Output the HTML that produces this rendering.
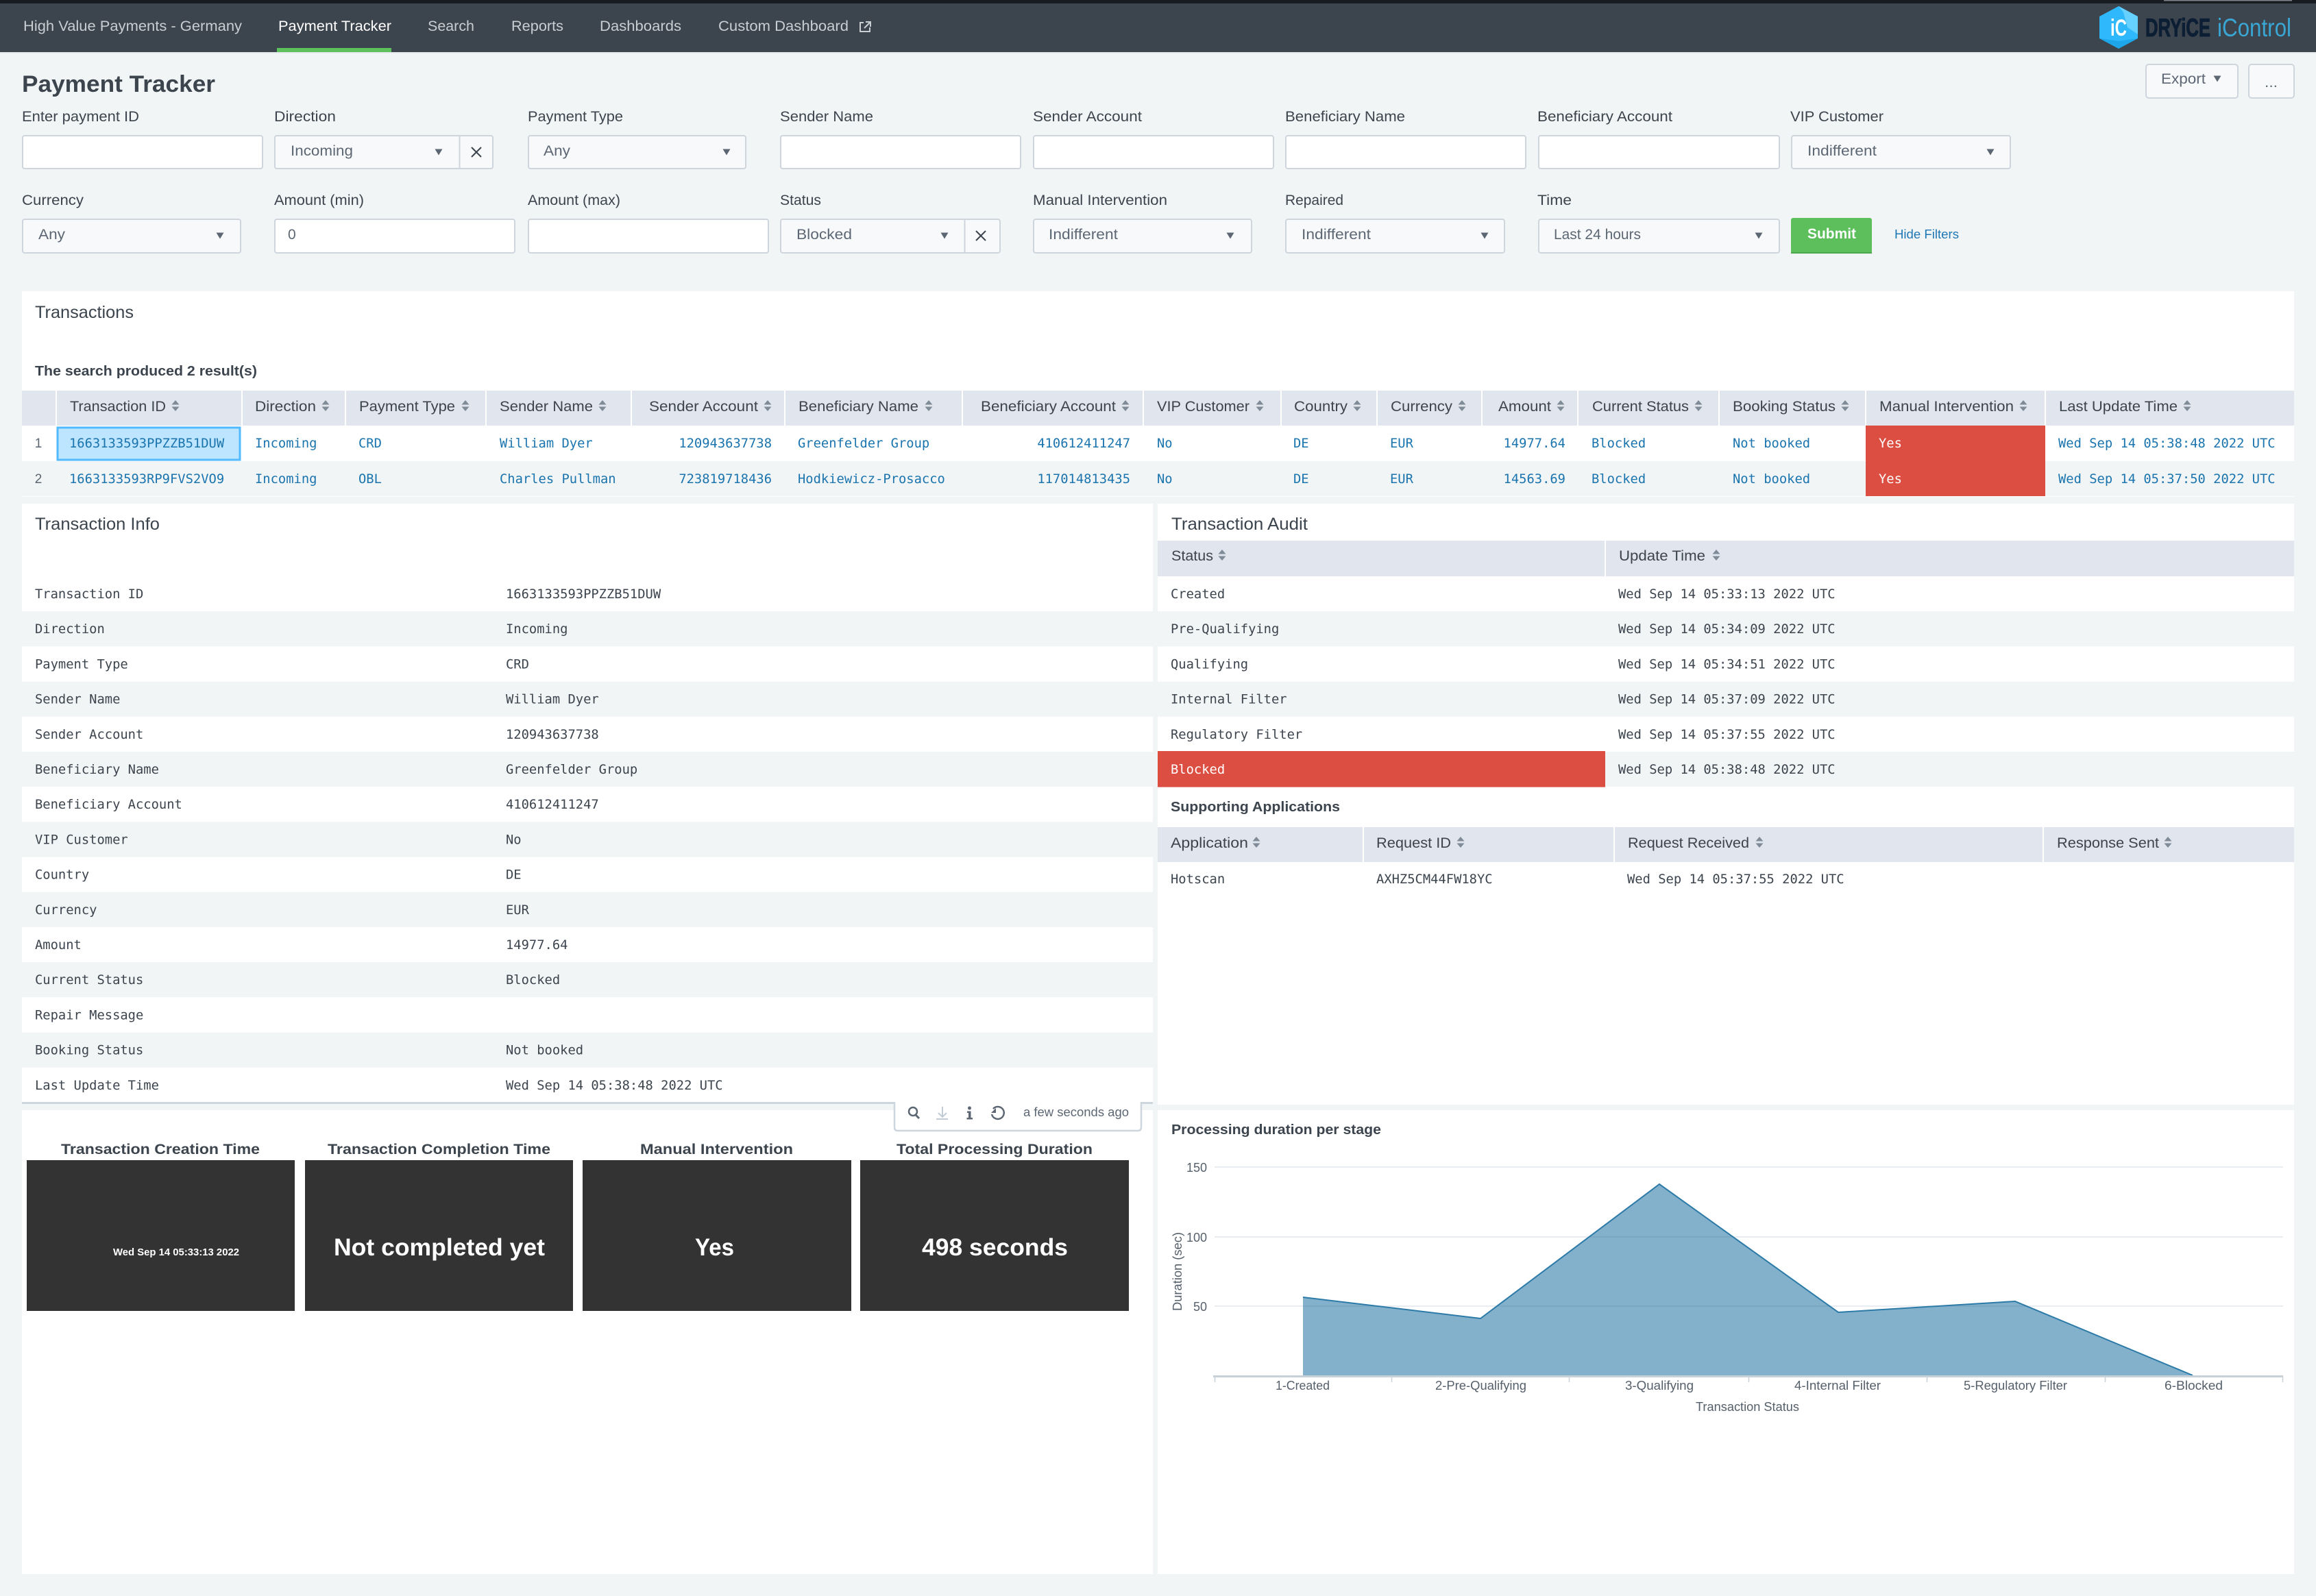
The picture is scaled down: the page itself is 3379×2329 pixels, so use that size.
<!DOCTYPE html>
<html lang="en"><head><meta charset="utf-8"><title>Payment Tracker</title>
<style>
html,body{margin:0;padding:0;background:#f2f5f6;width:3379px;height:2329px;overflow:hidden}
svg{display:block}
text{font-family:"Liberation Sans",sans-serif;fill:#3c444d;font-size:21px}
.n{fill:#c9ced3}
.h{font-size:21px}
.t{font-size:25px}
.b{font-weight:bold;font-size:20.5px}
.m{font-family:"DejaVu Sans Mono","Liberation Mono",monospace;font-size:18.8px}
.l{font-family:"DejaVu Sans Mono","Liberation Mono",monospace;font-size:18.8px;fill:#1a74ae}
.w{fill:#fff}
.sel{fill:#5c6773}
.c{font-size:18px;fill:#56606b}
</style></head><body>
<svg width="3379" height="2329" viewBox="0 0 3379 2329" xmlns="http://www.w3.org/2000/svg">
<defs>
<g id="srt"><polygon points="-5.5,-1.5 5.5,-1.5 0,-8" fill="#7f8b97"/><polygon points="-5.5,1.5 5.5,1.5 0,8" fill="#7f8b97"/></g>
<polygon id="car" points="-5.5,-4.5 5.5,-4.5 0,4.5" fill="#5c6773"/>
</defs>
<rect width="3379" height="2329" fill="#f2f5f6"/>

<!-- nav -->
<rect width="3379" height="76" fill="#3c444d"/>
<rect width="3379" height="5" fill="#171c20"/>
<rect x="3157" y="0" width="187" height="1.5" fill="#7d848b"/>
<rect y="76" width="3379" height="1.5" fill="#dfe3e6"/>
<rect x="404" y="70" width="167" height="6" fill="#5cc05c"/>
<text class="n" x="34" y="45" textLength="319" lengthAdjust="spacingAndGlyphs">High Value Payments - Germany</text>
<text class="w" x="406" y="45" textLength="165" lengthAdjust="spacingAndGlyphs">Payment Tracker</text>
<text class="n" x="624" y="45" textLength="68" lengthAdjust="spacingAndGlyphs">Search</text>
<text class="n" x="746" y="45" textLength="76" lengthAdjust="spacingAndGlyphs">Reports</text>
<text class="n" x="875" y="45" textLength="119" lengthAdjust="spacingAndGlyphs">Dashboards</text>
<text class="n" x="1048" y="45" textLength="190" lengthAdjust="spacingAndGlyphs">Custom Dashboard</text>
<path d="M1260 33H1255V46H1269V40M1263 32H1270V39M1270 32L1261 41" fill="none" stroke="#c9ced3" stroke-width="2"/>

<!-- logo -->
<polygon points="3091,9 3119,24 3119,56 3091,71 3063,56 3063,24" fill="#2fb8fb"/>
<polygon points="3091,9 3119,24 3119,50 3104,40 3098,18" fill="#66d0ff"/>
<polygon points="3063,56 3091,71 3119,56 3091,60" fill="#1ea6ea"/>
<text x="3079" y="52" textLength="24" lengthAdjust="spacingAndGlyphs" style="font-size:34px;font-weight:bold;fill:#fff">iC</text>
<text x="3130" y="53" textLength="95" lengthAdjust="spacingAndGlyphs" style="font-size:37px;font-weight:bold;fill:#0c1e34;stroke:#0c1e34;stroke-width:1">DRYiCE</text>
<text x="3235" y="53" textLength="108" lengthAdjust="spacingAndGlyphs" style="font-size:37px;fill:#3aa6d4">iControl</text>

<!-- page title -->
<text x="32" y="134" textLength="282" lengthAdjust="spacingAndGlyphs" style="font-size:34px;font-weight:bold">Payment Tracker</text>

<!-- buttons -->
<rect x="3131" y="94" width="134" height="49" rx="4" fill="#f8f9fb" stroke="#cfd5dd" stroke-width="2"/>
<rect x="3281" y="94" width="66" height="49" rx="4" fill="#f8f9fb" stroke="#cfd5dd" stroke-width="2"/>
<text class="sel" x="3153" y="122" textLength="65" lengthAdjust="spacingAndGlyphs">Export</text>
<use href="#car" x="3235" y="115"/>
<text class="sel" x="3304" y="127" textLength="19" lengthAdjust="spacingAndGlyphs">...</text>

<!-- filter labels row 1 -->
<text x="32" y="177" textLength="171" lengthAdjust="spacingAndGlyphs">Enter payment ID</text>
<text x="400" y="177" textLength="90" lengthAdjust="spacingAndGlyphs">Direction</text>
<text x="770" y="177" textLength="139" lengthAdjust="spacingAndGlyphs">Payment Type</text>
<text x="1138" y="177" textLength="136" lengthAdjust="spacingAndGlyphs">Sender Name</text>
<text x="1507" y="177" textLength="159" lengthAdjust="spacingAndGlyphs">Sender Account</text>
<text x="1875" y="177" textLength="175" lengthAdjust="spacingAndGlyphs">Beneficiary Name</text>
<text x="2243" y="177" textLength="197" lengthAdjust="spacingAndGlyphs">Beneficiary Account</text>
<text x="2612" y="177" textLength="136" lengthAdjust="spacingAndGlyphs">VIP Customer</text>

<!-- filter boxes row 1 -->
<g stroke="#cfd5dd" stroke-width="2">
<rect x="33" y="198" width="350" height="48" rx="3" fill="#fff"/>
<rect x="401" y="198" width="318" height="48" rx="3" fill="#f8f9fb"/>
<rect x="771" y="198" width="317" height="48" rx="3" fill="#f8f9fb"/>
<rect x="1139" y="198" width="350" height="48" rx="3" fill="#fff"/>
<rect x="1508" y="198" width="350" height="48" rx="3" fill="#fff"/>
<rect x="1876" y="198" width="350" height="48" rx="3" fill="#fff"/>
<rect x="2245" y="198" width="351" height="48" rx="3" fill="#fff"/>
<rect x="2614" y="198" width="319" height="48" rx="3" fill="#f8f9fb"/>
<line x1="670.5" y1="198" x2="670.5" y2="246"/>
</g>
<text class="sel" x="424" y="227" textLength="91" lengthAdjust="spacingAndGlyphs">Incoming</text>
<use href="#car" x="640" y="222"/>
<path d="M688 215L702 229M702 215L688 229" stroke="#3c444d" stroke-width="2" fill="none"/>
<text class="sel" x="793" y="227" textLength="39" lengthAdjust="spacingAndGlyphs">Any</text>
<use href="#car" x="1060" y="222"/>
<text class="sel" x="2637" y="227" textLength="101" lengthAdjust="spacingAndGlyphs">Indifferent</text>
<use href="#car" x="2904" y="222"/>

<!-- filter labels row 2 -->
<text x="32" y="299" textLength="90" lengthAdjust="spacingAndGlyphs">Currency</text>
<text x="400" y="299" textLength="131" lengthAdjust="spacingAndGlyphs">Amount (min)</text>
<text x="770" y="299" textLength="135" lengthAdjust="spacingAndGlyphs">Amount (max)</text>
<text x="1138" y="299" textLength="60" lengthAdjust="spacingAndGlyphs">Status</text>
<text x="1507" y="299" textLength="196" lengthAdjust="spacingAndGlyphs">Manual Intervention</text>
<text x="1875" y="299" textLength="85" lengthAdjust="spacingAndGlyphs">Repaired</text>
<text x="2243" y="299" textLength="50" lengthAdjust="spacingAndGlyphs">Time</text>

<g stroke="#cfd5dd" stroke-width="2">
<rect x="33" y="320" width="318" height="49" rx="3" fill="#f8f9fb"/>
<rect x="401" y="320" width="350" height="49" rx="3" fill="#fff"/>
<rect x="771" y="320" width="350" height="49" rx="3" fill="#fff"/>
<rect x="1139" y="320" width="320" height="49" rx="3" fill="#f8f9fb"/>
<rect x="1508" y="320" width="318" height="49" rx="3" fill="#f8f9fb"/>
<rect x="1876" y="320" width="319" height="49" rx="3" fill="#f8f9fb"/>
<rect x="2245" y="320" width="351" height="49" rx="3" fill="#f8f9fb"/>
<line x1="1407.5" y1="320" x2="1407.5" y2="369"/>
</g>
<text class="sel" x="56" y="349" textLength="39" lengthAdjust="spacingAndGlyphs">Any</text>
<use href="#car" x="321" y="344"/>
<text class="sel" x="420" y="349">0</text>
<text class="sel" x="1162" y="349" textLength="81" lengthAdjust="spacingAndGlyphs">Blocked</text>
<use href="#car" x="1378" y="344"/>
<path d="M1424 337L1438 351M1438 337L1424 351" stroke="#3c444d" stroke-width="2" fill="none"/>
<text class="sel" x="1530" y="349" textLength="101" lengthAdjust="spacingAndGlyphs">Indifferent</text>
<use href="#car" x="1795" y="344"/>
<text class="sel" x="1899" y="349" textLength="101" lengthAdjust="spacingAndGlyphs">Indifferent</text>
<use href="#car" x="2166" y="344"/>
<text class="sel" x="2267" y="349" textLength="127" lengthAdjust="spacingAndGlyphs">Last 24 hours</text>
<use href="#car" x="2566" y="344"/>
<rect x="2613" y="318" width="118" height="52" rx="3" fill="#5cbf5c"/>
<rect x="2613" y="368" width="118" height="2" fill="#4ba74b"/>
<text x="2637" y="348" textLength="71" lengthAdjust="spacingAndGlyphs" style="fill:#fff;font-weight:bold">Submit</text>
<text x="2764" y="348" textLength="94" lengthAdjust="spacingAndGlyphs" style="fill:#1e77b5;font-size:18px">Hide Filters</text>

<!-- Transactions panel -->
<rect x="32" y="425" width="3315" height="300" fill="#fff"/>
<text class="t" x="51" y="464" textLength="144" lengthAdjust="spacingAndGlyphs">Transactions</text>
<text class="b" x="51" y="548" textLength="324" lengthAdjust="spacingAndGlyphs">The search produced 2 result(s)</text>
<rect x="32" y="570" width="3315" height="51" fill="#e1e5ed"/>
<g fill="#fff">
<rect x="81" y="570" width="2" height="51"/><rect x="352" y="570" width="2" height="51"/><rect x="503" y="570" width="2" height="51"/><rect x="708" y="570" width="2" height="51"/><rect x="920" y="570" width="2" height="51"/><rect x="1144" y="570" width="2" height="51"/><rect x="1403" y="570" width="2" height="51"/><rect x="1667" y="570" width="2" height="51"/><rect x="1868" y="570" width="2" height="51"/><rect x="2008" y="570" width="2" height="51"/><rect x="2161" y="570" width="2" height="51"/><rect x="2301" y="570" width="2" height="51"/><rect x="2507" y="570" width="2" height="51"/><rect x="2721" y="570" width="2" height="51"/><rect x="2983" y="570" width="2" height="51"/>
</g>
<text x="102" y="600" textLength="140" lengthAdjust="spacingAndGlyphs">Transaction ID</text><use href="#srt" x="256" y="592"/>
<text x="372" y="600" textLength="89" lengthAdjust="spacingAndGlyphs">Direction</text><use href="#srt" x="475" y="592"/>
<text x="524" y="600" textLength="140" lengthAdjust="spacingAndGlyphs">Payment Type</text><use href="#srt" x="679" y="592"/>
<text x="729" y="600" textLength="136" lengthAdjust="spacingAndGlyphs">Sender Name</text><use href="#srt" x="879" y="592"/>
<text x="947" y="600" textLength="159" lengthAdjust="spacingAndGlyphs">Sender Account</text><use href="#srt" x="1120" y="592"/>
<text x="1165" y="600" textLength="175" lengthAdjust="spacingAndGlyphs">Beneficiary Name</text><use href="#srt" x="1355" y="592"/>
<text x="1431" y="600" textLength="197" lengthAdjust="spacingAndGlyphs">Beneficiary Account</text><use href="#srt" x="1642" y="592"/>
<text x="1688" y="600" textLength="135" lengthAdjust="spacingAndGlyphs">VIP Customer</text><use href="#srt" x="1838" y="592"/>
<text x="1888" y="600" textLength="78" lengthAdjust="spacingAndGlyphs">Country</text><use href="#srt" x="1980" y="592"/>
<text x="2029" y="600" textLength="90" lengthAdjust="spacingAndGlyphs">Currency</text><use href="#srt" x="2133" y="592"/>
<text x="2186" y="600" textLength="77" lengthAdjust="spacingAndGlyphs">Amount</text><use href="#srt" x="2277" y="592"/>
<text x="2323" y="600" textLength="141" lengthAdjust="spacingAndGlyphs">Current Status</text><use href="#srt" x="2478" y="592"/>
<text x="2528" y="600" textLength="150" lengthAdjust="spacingAndGlyphs">Booking Status</text><use href="#srt" x="2692" y="592"/>
<text x="2742" y="600" textLength="196" lengthAdjust="spacingAndGlyphs">Manual Intervention</text><use href="#srt" x="2952" y="592"/>
<text x="3004" y="600" textLength="173" lengthAdjust="spacingAndGlyphs">Last Update Time</text><use href="#srt" x="3191" y="592"/>

<rect x="32" y="673" width="3315" height="51" fill="#f2f5f6"/>
<rect x="84" y="624" width="266" height="47" fill="#bde5ff" stroke="#52baff" stroke-width="3"/>
<rect x="2722" y="621" width="262" height="103" fill="#dc4e41"/>
<text x="56" y="653" text-anchor="middle" style="font-size:19px;fill:#5c6773">1</text>
<text x="56" y="705" text-anchor="middle" style="font-size:19px;fill:#5c6773">2</text>
<text class="l" x="101" y="653">1663133593PPZZB51DUW</text>
<text class="l" x="372" y="653">Incoming</text>
<text class="l" x="523" y="653">CRD</text>
<text class="l" x="729" y="653">William Dyer</text>
<text class="l" x="1126" y="653" text-anchor="end">120943637738</text>
<text class="l" x="1164" y="653">Greenfelder Group</text>
<text class="l" x="1649" y="653" text-anchor="end">410612411247</text>
<text class="l" x="1688" y="653">No</text>
<text class="l" x="1887" y="653">DE</text>
<text class="l" x="2028" y="653">EUR</text>
<text class="l" x="2284" y="653" text-anchor="end">14977.64</text>
<text class="l" x="2322" y="653">Blocked</text>
<text class="l" x="2528" y="653">Not booked</text>
<text class="m" x="2741" y="653" style="fill:#fff">Yes</text>
<text class="l" x="3003" y="653">Wed Sep 14 05:38:48 2022 UTC</text>
<text class="l" x="101" y="705">1663133593RP9FVS2VO9</text>
<text class="l" x="372" y="705">Incoming</text>
<text class="l" x="523" y="705">OBL</text>
<text class="l" x="729" y="705">Charles Pullman</text>
<text class="l" x="1126" y="705" text-anchor="end">723819718436</text>
<text class="l" x="1164" y="705">Hodkiewicz-Prosacco</text>
<text class="l" x="1649" y="705" text-anchor="end">117014813435</text>
<text class="l" x="1688" y="705">No</text>
<text class="l" x="1887" y="705">DE</text>
<text class="l" x="2028" y="705">EUR</text>
<text class="l" x="2284" y="705" text-anchor="end">14563.69</text>
<text class="l" x="2322" y="705">Blocked</text>
<text class="l" x="2528" y="705">Not booked</text>
<text class="m" x="2741" y="705" style="fill:#fff">Yes</text>
<text class="l" x="3003" y="705">Wed Sep 14 05:37:50 2022 UTC</text>

<!-- Transaction Info -->
<rect x="32" y="735" width="1650" height="873" fill="#fff"/>
<rect x="32" y="1608" width="1650" height="3" fill="#cdd5dd"/>
<text class="t" x="51" y="773" textLength="182" lengthAdjust="spacingAndGlyphs">Transaction Info</text>
<g fill="#f2f5f6">
<rect x="32" y="892.2" width="1650" height="51.2"/>
<rect x="32" y="994.6" width="1650" height="51.2"/>
<rect x="32" y="1097" width="1650" height="51.2"/>
<rect x="32" y="1199.4" width="1650" height="51.2"/>
<rect x="32" y="1301.8" width="1650" height="51.2"/>
<rect x="32" y="1404.2" width="1650" height="51.2"/>
<rect x="32" y="1506.6" width="1650" height="51.2"/>
</g>
<text class="m" x="51" y="873">Transaction ID</text><text class="m" x="738" y="873">1663133593PPZZB51DUW</text>
<text class="m" x="51" y="924.2">Direction</text><text class="m" x="738" y="924.2">Incoming</text>
<text class="m" x="51" y="975.4">Payment Type</text><text class="m" x="738" y="975.4">CRD</text>
<text class="m" x="51" y="1026.6">Sender Name</text><text class="m" x="738" y="1026.6">William Dyer</text>
<text class="m" x="51" y="1077.8">Sender Account</text><text class="m" x="738" y="1077.8">120943637738</text>
<text class="m" x="51" y="1129">Beneficiary Name</text><text class="m" x="738" y="1129">Greenfelder Group</text>
<text class="m" x="51" y="1180.2">Beneficiary Account</text><text class="m" x="738" y="1180.2">410612411247</text>
<text class="m" x="51" y="1231.4">VIP Customer</text><text class="m" x="738" y="1231.4">No</text>
<text class="m" x="51" y="1282.6">Country</text><text class="m" x="738" y="1282.6">DE</text>
<text class="m" x="51" y="1333.8">Currency</text><text class="m" x="738" y="1333.8">EUR</text>
<text class="m" x="51" y="1385">Amount</text><text class="m" x="738" y="1385">14977.64</text>
<text class="m" x="51" y="1436.2">Current Status</text><text class="m" x="738" y="1436.2">Blocked</text>
<text class="m" x="51" y="1487.4">Repair Message</text>
<text class="m" x="51" y="1538.6">Booking Status</text><text class="m" x="738" y="1538.6">Not booked</text>
<text class="m" x="51" y="1589.8">Last Update Time</text><text class="m" x="738" y="1589.8">Wed Sep 14 05:38:48 2022 UTC</text>

<!-- Transaction Audit -->
<rect x="1689" y="735" width="1658" height="877" fill="#fff"/>
<text class="t" x="1709" y="773" textLength="199" lengthAdjust="spacingAndGlyphs">Transaction Audit</text>
<rect x="1689" y="789" width="1658" height="52" fill="#e1e5ed"/>
<rect x="2341" y="789" width="2" height="52" fill="#fff"/>
<text x="1709" y="818" textLength="61" lengthAdjust="spacingAndGlyphs">Status</text><use href="#srt" x="1783" y="810"/>
<text x="2362" y="818" textLength="126" lengthAdjust="spacingAndGlyphs">Update Time</text><use href="#srt" x="2504" y="810"/>
<rect x="1689" y="892.2" width="1658" height="51.2" fill="#f2f5f6"/>
<rect x="1689" y="994.6" width="1658" height="51.2" fill="#f2f5f6"/>
<rect x="1689" y="1097" width="1658" height="51.2" fill="#f2f5f6"/>
<rect x="1689" y="1096" width="653" height="52.6" fill="#dc4e41"/>
<text class="m" x="1708" y="873">Created</text><text class="m" x="2361" y="873">Wed Sep 14 05:33:13 2022 UTC</text>
<text class="m" x="1708" y="924.2">Pre-Qualifying</text><text class="m" x="2361" y="924.2">Wed Sep 14 05:34:09 2022 UTC</text>
<text class="m" x="1708" y="975.4">Qualifying</text><text class="m" x="2361" y="975.4">Wed Sep 14 05:34:51 2022 UTC</text>
<text class="m" x="1708" y="1026.6">Internal Filter</text><text class="m" x="2361" y="1026.6">Wed Sep 14 05:37:09 2022 UTC</text>
<text class="m" x="1708" y="1077.8">Regulatory Filter</text><text class="m" x="2361" y="1077.8">Wed Sep 14 05:37:55 2022 UTC</text>
<text class="m" x="1708" y="1129" style="fill:#fff">Blocked</text><text class="m" x="2361" y="1129">Wed Sep 14 05:38:48 2022 UTC</text>

<text class="b" x="1708" y="1184" textLength="247" lengthAdjust="spacingAndGlyphs">Supporting Applications</text>
<rect x="1689" y="1207" width="1658" height="51" fill="#e1e5ed"/>
<g fill="#fff"><rect x="1988" y="1207" width="2" height="51"/><rect x="2354" y="1207" width="2" height="51"/><rect x="2980" y="1207" width="2" height="51"/></g>
<text x="1708" y="1237" textLength="113" lengthAdjust="spacingAndGlyphs">Application</text><use href="#srt" x="1833" y="1229"/>
<text x="2008" y="1237" textLength="109" lengthAdjust="spacingAndGlyphs">Request ID</text><use href="#srt" x="2131" y="1229"/>
<text x="2375" y="1237" textLength="177" lengthAdjust="spacingAndGlyphs">Request Received</text><use href="#srt" x="2567" y="1229"/>
<text x="3001" y="1237" textLength="149" lengthAdjust="spacingAndGlyphs">Response Sent</text><use href="#srt" x="3163" y="1229"/>
<text class="m" x="1708" y="1289">Hotscan</text>
<text class="m" x="2008" y="1289">AXHZ5CM44FW18YC</text>
<text class="m" x="2374" y="1289">Wed Sep 14 05:37:55 2022 UTC</text>

<!-- Bottom left panel -->
<rect x="32" y="1620" width="1650" height="677" fill="#fff"/>
<path d="M1305 1608V1645Q1305 1650 1310 1650H1660Q1665 1650 1665 1645V1608" fill="#fff" stroke="#cdd5dd" stroke-width="2.5"/>
<rect x="1306.5" y="1606" width="357" height="6" fill="#fff"/>
<circle cx="1332" cy="1622" r="6" fill="none" stroke="#5c6773" stroke-width="2.5"/>
<path d="M1336 1627L1341 1632" stroke="#5c6773" stroke-width="3"/>
<path d="M1375 1615V1629M1369 1624L1375 1630L1381 1624M1366 1633H1383" fill="none" stroke="#c3cbd4" stroke-width="2"/>
<circle cx="1414.5" cy="1617" r="2.5" fill="#5c6773"/>
<path d="M1411 1621.5H1416.5V1631H1419V1633.5H1410.5V1631H1413V1624H1411Z" fill="#5c6773"/>
<path d="M1449 1618A9 9 0 1 1 1447 1626" fill="none" stroke="#5c6773" stroke-width="2.5"/>
<polygon points="1446,1624 1453,1624 1453,1617" fill="#5c6773"/>
<text x="1493" y="1629" textLength="154" lengthAdjust="spacingAndGlyphs" style="font-size:18px;fill:#5c6773">a few seconds ago</text>

<text class="b" x="89" y="1684" textLength="290" lengthAdjust="spacingAndGlyphs" style="font-size:21.5px">Transaction Creation Time</text>
<text class="b" x="478" y="1684" textLength="325" lengthAdjust="spacingAndGlyphs" style="font-size:21.5px">Transaction Completion Time</text>
<text class="b" x="934" y="1684" textLength="223" lengthAdjust="spacingAndGlyphs" style="font-size:21.5px">Manual Intervention</text>
<text class="b" x="1308" y="1684" textLength="286" lengthAdjust="spacingAndGlyphs" style="font-size:21.5px">Total Processing Duration</text>
<g fill="#333">
<rect x="39" y="1693" width="391" height="220"/>
<rect x="445" y="1693" width="391" height="220"/>
<rect x="850" y="1693" width="392" height="220"/>
<rect x="1255" y="1693" width="392" height="220"/>
</g>
<text x="165" y="1832" textLength="184" lengthAdjust="spacingAndGlyphs" style="font-size:14.5px;font-weight:bold;fill:#fff">Wed Sep 14 05:33:13 2022</text>
<text x="487" y="1832" textLength="308" lengthAdjust="spacingAndGlyphs" style="font-size:35px;font-weight:bold;fill:#fff">Not completed yet</text>
<text x="1014" y="1832" textLength="57" lengthAdjust="spacingAndGlyphs" style="font-size:35px;font-weight:bold;fill:#fff">Yes</text>
<text x="1345" y="1832" textLength="213" lengthAdjust="spacingAndGlyphs" style="font-size:35px;font-weight:bold;fill:#fff">498 seconds</text>

<!-- Chart panel -->
<rect x="1689" y="1620" width="1658" height="677" fill="#fff"/>
<text class="b" x="1709" y="1655" textLength="306" lengthAdjust="spacingAndGlyphs">Processing duration per stage</text>
<g fill="#e9edf1">
<rect x="1772" y="1702" width="1559" height="2"/>
<rect x="1772" y="1804" width="1559" height="2"/>
<rect x="1772" y="1905" width="1559" height="2"/>
</g>
<polygon points="1901,2007 1901,1893 2160,1924 2421,1728 2682,1915 2940,1899 3199,2007" fill="#1e6f9f" fill-opacity=".55"/>
<polyline points="1901,1893 2160,1924 2421,1728 2682,1915 2940,1899 3199,2007" fill="none" stroke="#2c7aa8" stroke-width="2"/>
<rect x="1770" y="2007" width="1561" height="3" fill="#c8d0d8"/>
<path d="M1772.5 2008V2017M2030.5 2008V2017M2289.5 2008V2017M2551.5 2008V2017M2811.5 2008V2017M3071.5 2008V2017M3330.5 2008V2017" stroke="#c8d0d8" stroke-width="1.5" fill="none"/>
<text class="c" x="1761" y="1710" text-anchor="end">150</text>
<text class="c" x="1761" y="1812" text-anchor="end">100</text>
<text class="c" x="1761" y="1913" text-anchor="end">50</text>
<text class="c" x="1861" y="2028" textLength="79" lengthAdjust="spacingAndGlyphs">1-Created</text>
<text class="c" x="2094" y="2028" textLength="133" lengthAdjust="spacingAndGlyphs">2-Pre-Qualifying</text>
<text class="c" x="2371" y="2028" textLength="100" lengthAdjust="spacingAndGlyphs">3-Qualifying</text>
<text class="c" x="2618" y="2028" textLength="126" lengthAdjust="spacingAndGlyphs">4-Internal Filter</text>
<text class="c" x="2865" y="2028" textLength="151" lengthAdjust="spacingAndGlyphs">5-Regulatory Filter</text>
<text class="c" x="3158" y="2028" textLength="85" lengthAdjust="spacingAndGlyphs">6-Blocked</text>
<text class="c" x="2474" y="2059" textLength="151" lengthAdjust="spacingAndGlyphs">Transaction Status</text>
<text class="c" transform="translate(1724 1913) rotate(-90)" textLength="115" lengthAdjust="spacingAndGlyphs">Duration (sec)</text>
</svg>
</body></html>
